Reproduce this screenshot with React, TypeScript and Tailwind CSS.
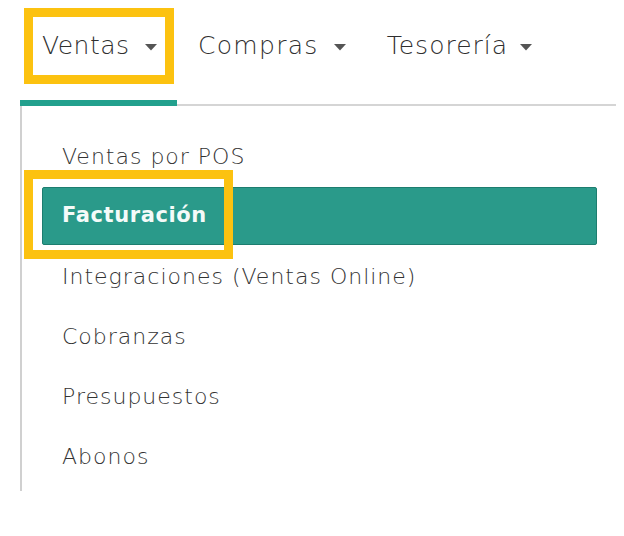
import React from "react";

const Caret = ({ ml }: { ml: string }) => (
  <svg width="12" height="7" viewBox="0 0 12 7" className={ml + " mt-[3px] shrink-0"}>
    <path d="M0 0 L12 0 L6 6.5 Z" fill="#555" />
  </svg>
);

const items = [
  "Ventas por POS",
  "Facturación",
  "Integraciones (Ventas Online)",
  "Cobranzas",
  "Presupuestos",
  "Abonos",
];

export default function App() {
  return (
    <div
      className="relative w-[624px] h-[536px] bg-white overflow-hidden"
      style={{ fontFamily: '"DejaVu Sans", "Open Sans", sans-serif' }}
    >
      {/* nav */}
      <div className="flex items-end pl-[20px] pr-[8px] h-[106px]">
        <div className="w-[157px] h-full flex items-center pl-[22px] border-b-[6px] border-[#22a08d] text-[25px] font-light tracking-[0.5px] text-[#2f2f2f] pb-[8px]">
          <span>Ventas</span>
          <Caret ml="ml-[15px]" />
        </div>
        <div className="flex-1 h-full flex items-center border-b-2 border-[#d5d5d5] text-[25px] font-light text-[#2f2f2f] pb-[12px]">
          <div className="flex items-center ml-[21px] tracking-[1.3px]">
            <span>Compras</span>
            <Caret ml="ml-[15px]" />
          </div>
          <div className="flex items-center ml-[41px] tracking-[1px]">
            <span>Tesorería</span>
            <Caret ml="ml-[12px]" />
          </div>
        </div>
      </div>

      {/* menu */}
      <div className="ml-[20px] w-[577px] border-l-2 border-[#d0d0d0] pt-[20px] pb-[5px]">
        {items.map((t, i) =>
          i === 1 ? (
            <div key={t} className="h-[60px] py-[1px] pl-[20px]">
              <div className="h-full flex items-center bg-[#2a9a8a] border border-[#1d7d6f] rounded-[2px] pl-[19px] text-[#f4fbf9] font-bold tracking-[0.6px] text-[21px]">
                {t}
              </div>
            </div>
          ) : (
            <div key={t} className="h-[60px] flex items-center pl-[40px] text-[22px] font-light tracking-[1px] text-[#333]">
              {t}
            </div>
          )
        )}
      </div>

      {/* yellow highlight boxes */}
      <div className="absolute left-[24px] top-[8px] w-[150px] h-[76px] border-[9px] border-[#fcc210]" />
      <div className="absolute left-[24px] top-[170px] w-[209px] h-[89px] border-[9px] border-[#fcc210]" />
    </div>
  );
}
